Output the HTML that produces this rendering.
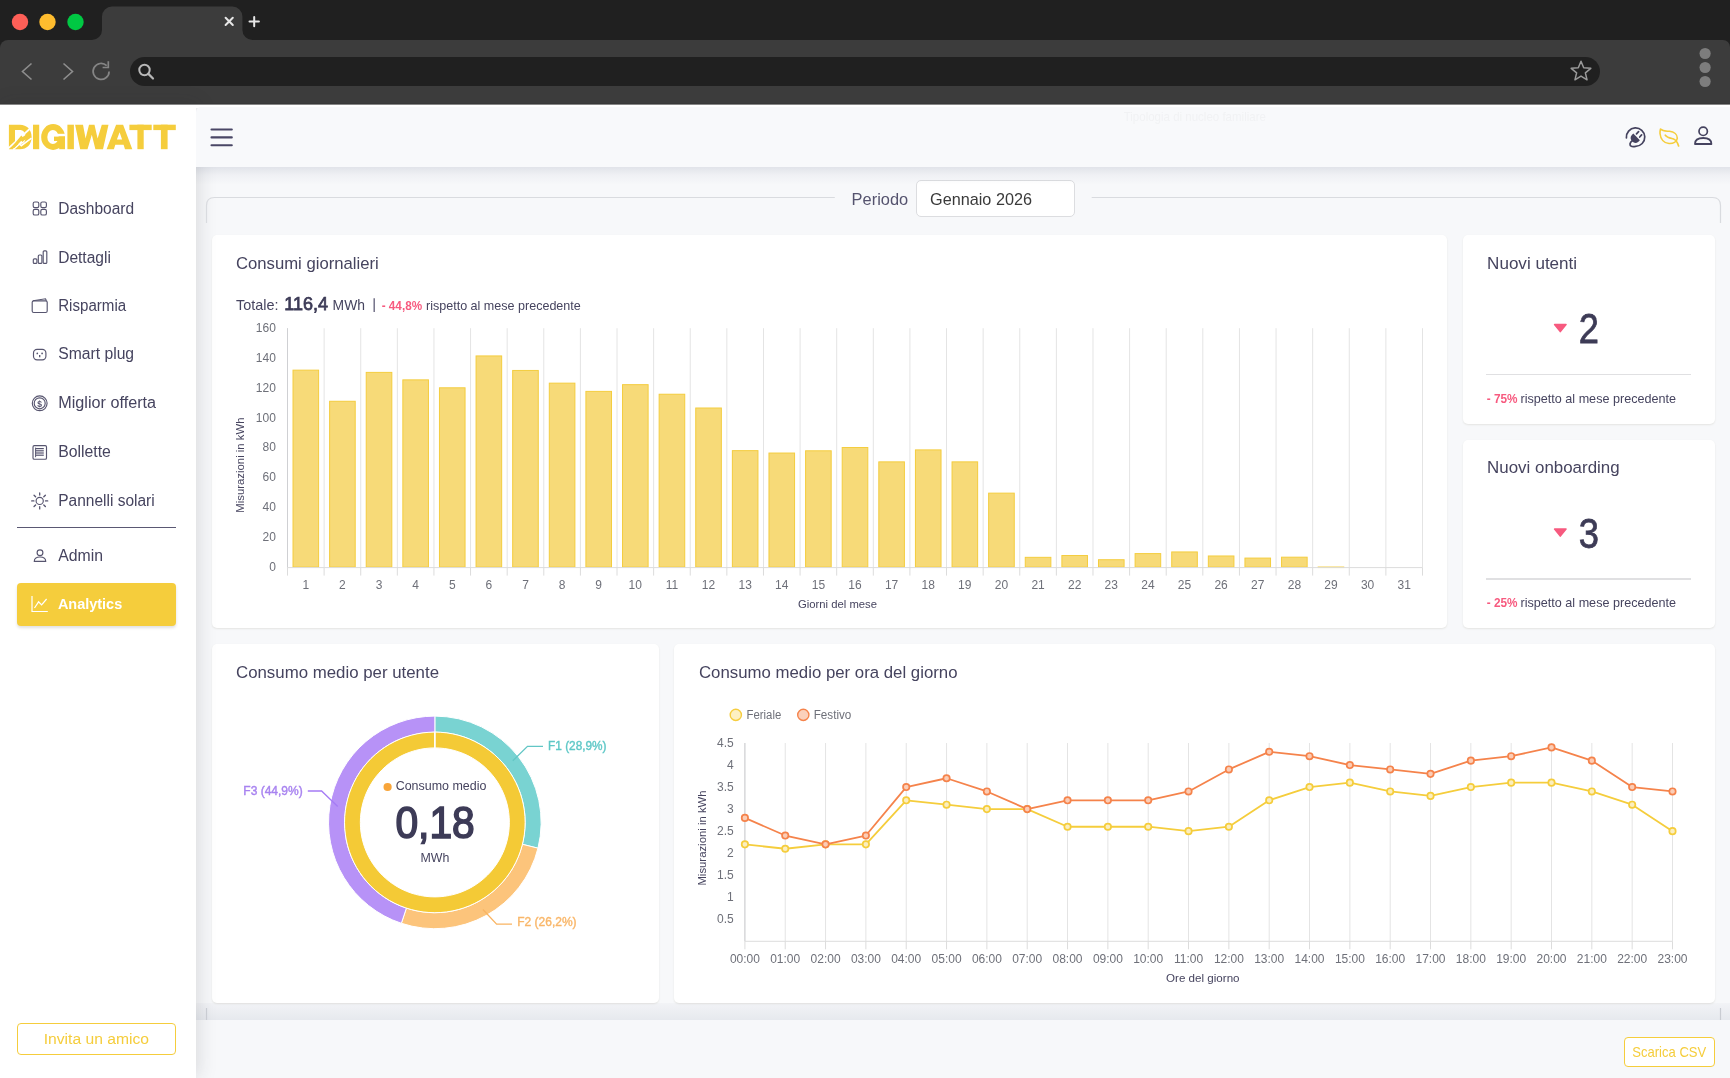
<!DOCTYPE html><html><head><meta charset="utf-8"><style>html,body{margin:0;padding:0}body{width:1730px;height:1078px;overflow:hidden;position:relative;font-family:"Liberation Sans",sans-serif;background:#202020}svg text{font-family:"Liberation Sans",sans-serif}</style></head><body><div style="position:absolute;left:0;top:0;width:1730px;height:40px;background:#202020"></div><div style="position:absolute;left:0;top:40px;width:1730px;height:64px;background:#3c3c3c;border-top-right-radius:7px;border-top-left-radius:8px"></div><div style="position:absolute;left:130px;top:57px;width:1470px;height:29px;background:#202020;border-radius:15px"></div><div style="position:absolute;left:0;top:104px;width:1730px;height:974px;background:#f7f8fa"></div><div style="position:absolute;left:0;top:103px;width:1730px;height:1px;background:#383838"></div><div style="position:absolute;left:196px;top:104px;width:1534px;height:4px;background:#ffffff;z-index:3"></div><div style="position:absolute;left:196px;top:107px;width:1534px;height:60px;background:#f8f9fb;z-index:3;border-top-left-radius:5px"></div><div style="position:absolute;left:196px;top:167px;width:1534px;height:18px;background:linear-gradient(rgba(30,45,85,0.10),rgba(30,45,85,0.035) 45%,rgba(30,45,85,0));z-index:3"></div><div style="position:absolute;left:0;top:104px;width:196px;height:974px;background:#ffffff;box-shadow:2px 0 18px rgba(40,42,48,0.15);z-index:2"></div><div style="position:absolute;left:17px;top:527px;width:159px;height:1.4px;background:#5a5873;z-index:3"></div><div style="position:absolute;left:17px;top:582.5px;width:159px;height:43px;background:#f5cd3c;border-radius:4px;box-shadow:0 2px 3px rgba(0,0,0,0.12);z-index:3"></div><div style="position:absolute;left:17px;top:1023px;width:157px;height:30px;border:1.3px solid #f5cd3c;border-radius:4px;background:#fff;z-index:3"></div><div style="position:absolute;left:916.2px;top:180px;width:156.5px;height:34.5px;background:#fff;border:1px solid #dcdde0;border-radius:5px;z-index:1"></div><div style="position:absolute;left:196px;top:1003px;width:1534px;height:17px;background:linear-gradient(#f2f3f6,#e6e9ee)"></div><div style="position:absolute;left:1623.5px;top:1037px;width:89px;height:27.5px;border:1.3px solid #f5cd3c;border-radius:4px;background:#fff;z-index:1"></div><div style="position:absolute;left:212px;top:234.5px;width:1234.5px;height:393px;background:#fff;border-radius:5px;box-shadow:0 1px 2px rgba(70,60,20,0.10);z-index:1"></div><div style="position:absolute;left:1462.5px;top:234.5px;width:252.5px;height:189.5px;background:#fff;border-radius:5px;box-shadow:0 1px 2px rgba(70,60,20,0.10);z-index:1"></div><div style="position:absolute;left:1462.5px;top:440px;width:252.5px;height:188px;background:#fff;border-radius:5px;box-shadow:0 1px 2px rgba(70,60,20,0.10);z-index:1"></div><div style="position:absolute;left:212px;top:643.6px;width:447px;height:359px;background:#fff;border-radius:5px;box-shadow:0 1px 2px rgba(70,60,20,0.10);z-index:1"></div><div style="position:absolute;left:674.2px;top:643.6px;width:1040.8px;height:359px;background:#fff;border-radius:5px;box-shadow:0 1px 2px rgba(70,60,20,0.10);z-index:1"></div><div style="position:absolute;left:1486.2px;top:373.9px;width:205px;height:1.4px;background:#e0e0e2;z-index:2"></div><div style="position:absolute;left:1486.2px;top:578.4px;width:205px;height:1.4px;background:#e0e0e2;z-index:2"></div><svg width="1730" height="1078" style="position:absolute;left:0;top:0;z-index:10;will-change:transform"><circle cx="20.0" cy="22" r="8.2" fill="#fe5f57"/><circle cx="47.5" cy="22" r="8.2" fill="#febc2e"/><circle cx="75.5" cy="22" r="8.2" fill="#00c843"/><path d="M92 40 A10 10 0 0 0 102 30 L102 16.5 A10 10 0 0 1 112 6.5 L232.4 6.5 A10 10 0 0 1 242.4 16.5 L242.4 30 A10 10 0 0 0 252.4 40 Z" fill="#3c3c3c"/><path d="M225.6 17.8 L232.8 25 M232.8 17.8 L225.6 25" stroke="#e6e6e6" stroke-width="2" stroke-linecap="round"/><path d="M254.2 16.9 L254.2 26.3 M249.5 21.6 L258.9 21.6" stroke="#e6e6e6" stroke-width="2" stroke-linecap="round"/><path d="M31.5 63.5 L22.5 71.5 L31.5 79.5" fill="none" stroke="#8e8e8e" stroke-width="1.6"/><path d="M63.5 63.5 L72.5 71.5 L63.5 79.5" fill="none" stroke="#8e8e8e" stroke-width="1.6"/><path d="M109.1 71.4 A8 8 0 1 1 106.7 65.7" fill="none" stroke="#858585" stroke-width="1.7"/><path d="M102.6 67.5 L108.3 67.5 L108.3 61.2" fill="none" stroke="#858585" stroke-width="1.7"/><circle cx="144.5" cy="70" r="5.2" fill="none" stroke="#b8b8b8" stroke-width="2"/><path d="M148.4 73.9 L153 78.5" stroke="#b8b8b8" stroke-width="2.2" stroke-linecap="round"/><polygon points="1581.00,61.20 1583.70,67.78 1590.80,68.32 1585.37,72.92 1587.05,79.83 1581.00,76.10 1574.95,79.83 1576.63,72.92 1571.20,68.32 1578.30,67.78" fill="none" stroke="#9a9a9a" stroke-width="1.5" stroke-linejoin="round"/><circle cx="1705.1" cy="53.5" r="5.6" fill="#7d7d7d"/><circle cx="1705.1" cy="67.5" r="5.6" fill="#7d7d7d"/><circle cx="1705.1" cy="81.5" r="5.6" fill="#7d7d7d"/><rect x="0" y="103" width="1730" height="1.6" fill="#383838"/><g fill="#f5cd3c"><path fill-rule="evenodd" d="M8.9 124.7 L19.8 124.7 C27 124.7 31.6 129.6 31.6 136.9 C31.6 144.3 27 149.2 19.8 149.2 L8.9 149.2 Z M15 129.9 L19.3 129.9 C23.6 129.9 25.6 132.6 25.6 136.9 C25.6 141.3 23.6 144.1 19.3 144.1 L15 144.1 Z"/><path d="M6.9 149.6 L29.6 129" stroke="#fff" stroke-width="1.7" fill="none"/><path d="M13.2 149.6 L19.5 144 L21.3 145.7 L31.5 138.2" stroke="#fff" stroke-width="1.6" fill="none"/><path d="M10.4 148.4 L21.3 135.6 L22.6 137.1 L29.5 132.5 L31 135.3 L22.3 142.1 L21.3 140.8 L14.3 147.9 Z"/><rect x="33" y="124.7" width="6.2" height="24.5"/><ellipse cx="53.1" cy="137" rx="11.9" ry="12.9"/><ellipse cx="52.9" cy="137" rx="5.6" ry="7" fill="#fff"/><rect x="56.5" y="133.8" width="10" height="2.8" fill="#fff"/><rect x="54" y="136.6" width="11" height="4.4"/><rect x="59.2" y="136.6" width="5.8" height="12.6"/><rect x="67.4" y="124.7" width="6.5" height="24.5"/><path d="M75.1 124.7 L83 124.7 L85.6 138.6 L89 124.7 L94.5 124.7 L97.6 138.6 L101.8 124.7 L108.5 124.7 L103 149.2 L95.4 149.2 L91.8 134.8 L87.5 149.2 L80.2 149.2 Z"/><path fill-rule="evenodd" d="M106.6 149.2 L116.1 124.7 L123.1 124.7 L132.3 149.2 L125 149.2 L123.6 144.7 L115.3 144.7 L113.9 149.2 Z M119.6 132.3 L122.1 139.6 L116.9 139.6 Z"/><rect x="129.4" y="124.7" width="22.3" height="5.4"/><rect x="137.4" y="124.7" width="6.3" height="24.5"/><rect x="153.3" y="124.7" width="22.5" height="5.4"/><rect x="160.9" y="124.7" width="6.7" height="24.5"/></g><text x="58.2" y="213.9" font-size="15.60" fill="#46445f" font-weight="400" text-anchor="start" textLength="75.9" lengthAdjust="spacingAndGlyphs" >Dashboard</text><text x="58.2" y="263.0" font-size="15.60" fill="#46445f" font-weight="400" text-anchor="start" textLength="52.7" lengthAdjust="spacingAndGlyphs" >Dettagli</text><text x="58.2" y="311.2" font-size="15.60" fill="#46445f" font-weight="400" text-anchor="start" textLength="68.0" lengthAdjust="spacingAndGlyphs" >Risparmia</text><text x="58.2" y="358.5" font-size="15.60" fill="#46445f" font-weight="400" text-anchor="start" textLength="75.9" lengthAdjust="spacingAndGlyphs" >Smart plug</text><text x="58.2" y="408.0" font-size="15.60" fill="#46445f" font-weight="400" text-anchor="start" textLength="97.9" lengthAdjust="spacingAndGlyphs" >Miglior offerta</text><text x="58.2" y="456.5" font-size="15.60" fill="#46445f" font-weight="400" text-anchor="start" textLength="52.7" lengthAdjust="spacingAndGlyphs" >Bollette</text><text x="58.2" y="505.8" font-size="15.60" fill="#46445f" font-weight="400" text-anchor="start" textLength="96.5" lengthAdjust="spacingAndGlyphs" >Pannelli solari</text><text x="58.2" y="560.9" font-size="15.60" fill="#46445f" font-weight="400" text-anchor="start" textLength="44.8" lengthAdjust="spacingAndGlyphs" >Admin</text><rect x="33.2" y="202.0" width="5.6" height="5.6" rx="1.6" fill="none" stroke="#57556f" stroke-width="1.15"/><rect x="40.8" y="202.0" width="5.6" height="5.6" rx="1.6" fill="none" stroke="#57556f" stroke-width="1.15"/><rect x="33.2" y="209.4" width="5.6" height="5.6" rx="1.6" fill="none" stroke="#57556f" stroke-width="1.15"/><rect x="40.8" y="209.4" width="5.6" height="5.6" rx="1.6" fill="none" stroke="#57556f" stroke-width="1.15"/><rect x="33.3" y="258.8" width="3.6" height="4.6" rx="1" fill="none" stroke="#57556f" stroke-width="1.15"/><rect x="38.3" y="255" width="3.6" height="8.4" rx="1" fill="none" stroke="#57556f" stroke-width="1.15"/><rect x="43.2" y="250.8" width="3.6" height="12.6" rx="1" fill="none" stroke="#57556f" stroke-width="1.15"/><rect x="32.2" y="300.8" width="15" height="11.7" rx="1.5" fill="none" stroke="#57556f" stroke-width="1.15"/><path d="M33 300.8 L45.5 298.8 L46.4 300.8" fill="none" stroke="#57556f" stroke-width="1.15"/><rect x="33.5" y="349.4" width="12.4" height="10.5" rx="3.6" fill="none" stroke="#57556f" stroke-width="1.15"/><circle cx="37.3" cy="353.4" r="0.85" fill="#55536e"/><circle cx="42.1" cy="353.4" r="0.85" fill="#55536e"/><path d="M39.7 355 L39.7 357.2" stroke="#55536e" stroke-width="1.3"/><circle cx="39.7" cy="403.3" r="7.4" fill="none" stroke="#57556f" stroke-width="1.15"/><circle cx="39.7" cy="403.3" r="5.5" fill="none" stroke="#57556f" stroke-width="1.15"/><text x="39.7" y="406.5" font-size="8.5" font-weight="700" fill="#55536e" text-anchor="middle">$</text><rect x="33" y="445.6" width="13.5" height="13.6" rx="1.3" fill="none" stroke="#57556f" stroke-width="1.15"/><path d="M35.8 448.6 L43.8 448.6" stroke="#55536e" stroke-width="1.2"/><path d="M35.8 450.8 L43.8 450.8" stroke="#55536e" stroke-width="1.2"/><path d="M35.8 453.0 L43.8 453.0" stroke="#55536e" stroke-width="1.2"/><path d="M35.8 455.2 L43.8 455.2" stroke="#55536e" stroke-width="1.2"/><path d="M35.6 447.6 L35.6 457.2" stroke="#55536e" stroke-width="1"/><circle cx="39.7" cy="500.9" r="3.6" fill="none" stroke="#57556f" stroke-width="1.15"/><path d="M45.50 500.90 L47.70 500.90" stroke="#55536e" stroke-width="1.3" stroke-linecap="round"/><path d="M43.80 505.00 L45.36 506.56" stroke="#55536e" stroke-width="1.3" stroke-linecap="round"/><path d="M39.70 506.70 L39.70 508.90" stroke="#55536e" stroke-width="1.3" stroke-linecap="round"/><path d="M35.60 505.00 L34.04 506.56" stroke="#55536e" stroke-width="1.3" stroke-linecap="round"/><path d="M33.90 500.90 L31.70 500.90" stroke="#55536e" stroke-width="1.3" stroke-linecap="round"/><path d="M35.60 496.80 L34.04 495.24" stroke="#55536e" stroke-width="1.3" stroke-linecap="round"/><path d="M39.70 495.10 L39.70 492.90" stroke="#55536e" stroke-width="1.3" stroke-linecap="round"/><path d="M43.80 496.80 L45.36 495.24" stroke="#55536e" stroke-width="1.3" stroke-linecap="round"/><circle cx="40" cy="552.7" r="2.9" fill="none" stroke="#57556f" stroke-width="1.15"/><path d="M34.3 561.3 Q34.3 557 40 557 Q45.7 557 45.7 561.3 Z" fill="none" stroke="#57556f" stroke-width="1.15"/><text x="57.9" y="608.5" font-size="15.50" fill="#ffffff" font-weight="700" text-anchor="start" textLength="64.3" lengthAdjust="spacingAndGlyphs" >Analytics</text><path d="M32 596 L32 611.5 L47.8 611.5" fill="none" stroke="#ffffff" stroke-width="1.2"/><path d="M34.5 608 L38.6 601.8 L41.6 604.8 L46.6 599" fill="none" stroke="#ffffff" stroke-width="1.2"/><text x="43.7" y="1043.8" font-size="15.20" fill="#f5cd3c" font-weight="400" text-anchor="start" textLength="105.3" lengthAdjust="spacingAndGlyphs" >Invita un amico</text><path d="M211.5 129.5 L231.8 129.5" stroke="#4a4766" stroke-width="2.1" stroke-linecap="round"/><path d="M211.5 137.4 L231.8 137.4" stroke="#4a4766" stroke-width="2.1" stroke-linecap="round"/><path d="M211.5 145.2 L231.8 145.2" stroke="#4a4766" stroke-width="2.1" stroke-linecap="round"/><text x="1123.7" y="120.8" font-size="13.00" fill="#f1f2f4" font-weight="400" text-anchor="start" textLength="142.2" lengthAdjust="spacingAndGlyphs" >Tipologia di nucleo familiare</text><path d="M1626.4 137.9 A9.2 9.2 0 1 1 1635.6 146.3 Q1629.8 147.4 1630 144 Q1630.3 142 1632.2 140.8" fill="none" stroke="#45435f" stroke-width="1.7" stroke-linecap="round"/><path d="M1633.3 133.6 L1639.9 140.2 L1638.4 141.7 A4.7 4.7 0 0 1 1631.8 135.1 Z" fill="#45435f"/><path d="M1636.5 133.9 L1638.6 131.6 M1639.7 137 L1641.6 134.9" stroke="#45435f" stroke-width="1.7" stroke-linecap="round"/><path d="M1660.5 129 C1663 131.5 1666 131 1669.5 131.3 C1674 131.8 1677.5 134.5 1677.3 138.3 C1677 142 1673 143.8 1669 143.5 C1664 143 1660.5 139 1660 133.5 C1659.9 131.5 1660.2 130 1660.5 129 Z" fill="none" stroke="#f5cd3c" stroke-width="1.6" stroke-linejoin="round"/><path d="M1665.3 135.2 C1667 137.5 1670 138 1673 138.8 C1675.5 139.5 1677.5 142.5 1678.6 146" fill="none" stroke="#f5cd3c" stroke-width="1.7" stroke-linecap="round"/><circle cx="1703.2" cy="131.3" r="4.2" fill="none" stroke="#45435f" stroke-width="1.7"/><path d="M1695 144 Q1695 138 1703.2 138 Q1711.4 138 1711.4 144 Z" fill="none" stroke="#45435f" stroke-width="1.8" stroke-linejoin="round"/><path d="M206.5 223 L206.5 205.5 Q206.5 197.5 214.5 197.5 L834.8 197.5" fill="none" stroke="#d9dbdf" stroke-width="1.2"/><path d="M1091.7 197.5 L1712.5 197.5 Q1720.5 197.5 1720.5 205.5 L1720.5 223" fill="none" stroke="#d9dbdf" stroke-width="1.2"/><path d="M206.5 1008 L206.5 1020 M1720.5 1008 L1720.5 1020" stroke="#c9ccd2" stroke-width="1.2"/><text x="851.6" y="205.4" font-size="17.00" fill="#55536e" font-weight="400" text-anchor="start" textLength="56.6" lengthAdjust="spacingAndGlyphs" >Periodo</text><text x="930.0" y="205.4" font-size="17.00" fill="#3a3a3a" font-weight="400" text-anchor="start" textLength="102.0" lengthAdjust="spacingAndGlyphs" >Gennaio 2026</text><text x="1632.3" y="1056.7" font-size="14.50" fill="#f5cd3c" font-weight="400" text-anchor="start" textLength="73.9" lengthAdjust="spacingAndGlyphs" >Scarica CSV</text><text x="236.0" y="268.9" font-size="16.80" fill="#46445f" font-weight="400" text-anchor="start" textLength="142.8" lengthAdjust="spacingAndGlyphs" >Consumi giornalieri</text><text x="1487.1" y="269.0" font-size="16.80" fill="#46445f" font-weight="400" text-anchor="start" textLength="90.0" lengthAdjust="spacingAndGlyphs" >Nuovi utenti</text><text x="1487.1" y="472.9" font-size="16.80" fill="#46445f" font-weight="400" text-anchor="start" textLength="132.5" lengthAdjust="spacingAndGlyphs" >Nuovi onboarding</text><text x="236.0" y="677.8" font-size="16.80" fill="#46445f" font-weight="400" text-anchor="start" textLength="203.0" lengthAdjust="spacingAndGlyphs" >Consumo medio per utente</text><text x="699.0" y="677.8" font-size="16.80" fill="#46445f" font-weight="400" text-anchor="start" textLength="258.5" lengthAdjust="spacingAndGlyphs" >Consumo medio per ora del giorno</text><text x="236.0" y="310.1" font-size="14.60" fill="#46445f" font-weight="400" text-anchor="start" textLength="42.5" lengthAdjust="spacingAndGlyphs" >Totale:</text><text x="284.2" y="310.0" font-size="18.40" fill="#3d3b57" font-weight="400" text-anchor="start" textLength="43.8" lengthAdjust="spacingAndGlyphs" stroke="#3d3b57" stroke-width="0.75">116,4</text><text x="332.6" y="310.1" font-size="14.60" fill="#46445f" font-weight="400" text-anchor="start" textLength="32.4" lengthAdjust="spacingAndGlyphs" >MWh</text><path d="M374.2 298.3 L374.2 311.9" stroke="#6a6880" stroke-width="1.4"/><text x="381.7" y="309.7" font-size="13.00" fill="#f75a7f" font-weight="700" text-anchor="start" textLength="40.4" lengthAdjust="spacingAndGlyphs" >- 44,8%</text><text x="426.0" y="309.7" font-size="13.00" fill="#46445f" font-weight="400" text-anchor="start" textLength="154.8" lengthAdjust="spacingAndGlyphs" >rispetto al mese precedente</text><path d="M287.50 328.2 L287.50 567.6" stroke="#e4e4e4" stroke-width="1"/><path d="M324.11 328.2 L324.11 567.6" stroke="#e4e4e4" stroke-width="1"/><path d="M360.73 328.2 L360.73 567.6" stroke="#e4e4e4" stroke-width="1"/><path d="M397.34 328.2 L397.34 567.6" stroke="#e4e4e4" stroke-width="1"/><path d="M433.95 328.2 L433.95 567.6" stroke="#e4e4e4" stroke-width="1"/><path d="M470.56 328.2 L470.56 567.6" stroke="#e4e4e4" stroke-width="1"/><path d="M507.18 328.2 L507.18 567.6" stroke="#e4e4e4" stroke-width="1"/><path d="M543.79 328.2 L543.79 567.6" stroke="#e4e4e4" stroke-width="1"/><path d="M580.40 328.2 L580.40 567.6" stroke="#e4e4e4" stroke-width="1"/><path d="M617.02 328.2 L617.02 567.6" stroke="#e4e4e4" stroke-width="1"/><path d="M653.63 328.2 L653.63 567.6" stroke="#e4e4e4" stroke-width="1"/><path d="M690.24 328.2 L690.24 567.6" stroke="#e4e4e4" stroke-width="1"/><path d="M726.85 328.2 L726.85 567.6" stroke="#e4e4e4" stroke-width="1"/><path d="M763.47 328.2 L763.47 567.6" stroke="#e4e4e4" stroke-width="1"/><path d="M800.08 328.2 L800.08 567.6" stroke="#e4e4e4" stroke-width="1"/><path d="M836.69 328.2 L836.69 567.6" stroke="#e4e4e4" stroke-width="1"/><path d="M873.31 328.2 L873.31 567.6" stroke="#e4e4e4" stroke-width="1"/><path d="M909.92 328.2 L909.92 567.6" stroke="#e4e4e4" stroke-width="1"/><path d="M946.53 328.2 L946.53 567.6" stroke="#e4e4e4" stroke-width="1"/><path d="M983.15 328.2 L983.15 567.6" stroke="#e4e4e4" stroke-width="1"/><path d="M1019.76 328.2 L1019.76 567.6" stroke="#e4e4e4" stroke-width="1"/><path d="M1056.37 328.2 L1056.37 567.6" stroke="#e4e4e4" stroke-width="1"/><path d="M1092.98 328.2 L1092.98 567.6" stroke="#e4e4e4" stroke-width="1"/><path d="M1129.60 328.2 L1129.60 567.6" stroke="#e4e4e4" stroke-width="1"/><path d="M1166.21 328.2 L1166.21 567.6" stroke="#e4e4e4" stroke-width="1"/><path d="M1202.82 328.2 L1202.82 567.6" stroke="#e4e4e4" stroke-width="1"/><path d="M1239.44 328.2 L1239.44 567.6" stroke="#e4e4e4" stroke-width="1"/><path d="M1276.05 328.2 L1276.05 567.6" stroke="#e4e4e4" stroke-width="1"/><path d="M1312.66 328.2 L1312.66 567.6" stroke="#e4e4e4" stroke-width="1"/><path d="M1349.27 328.2 L1349.27 567.6" stroke="#e4e4e4" stroke-width="1"/><path d="M1385.89 328.2 L1385.89 567.6" stroke="#e4e4e4" stroke-width="1"/><path d="M1422.50 328.2 L1422.50 567.6" stroke="#e4e4e4" stroke-width="1"/><rect x="293.01" y="370.15" width="25.60" height="196.95" fill="#f7da78" stroke="#f4cd3f" stroke-width="1"/><rect x="329.62" y="401.27" width="25.60" height="165.83" fill="#f7da78" stroke="#f4cd3f" stroke-width="1"/><rect x="366.23" y="372.39" width="25.60" height="194.71" fill="#f7da78" stroke="#f4cd3f" stroke-width="1"/><rect x="402.85" y="379.87" width="25.60" height="187.23" fill="#f7da78" stroke="#f4cd3f" stroke-width="1"/><rect x="439.46" y="387.80" width="25.60" height="179.30" fill="#f7da78" stroke="#f4cd3f" stroke-width="1"/><rect x="476.07" y="355.93" width="25.60" height="211.17" fill="#f7da78" stroke="#f4cd3f" stroke-width="1"/><rect x="512.68" y="370.45" width="25.60" height="196.65" fill="#f7da78" stroke="#f4cd3f" stroke-width="1"/><rect x="549.30" y="383.16" width="25.60" height="183.94" fill="#f7da78" stroke="#f4cd3f" stroke-width="1"/><rect x="585.91" y="391.39" width="25.60" height="175.71" fill="#f7da78" stroke="#f4cd3f" stroke-width="1"/><rect x="622.52" y="384.66" width="25.60" height="182.44" fill="#f7da78" stroke="#f4cd3f" stroke-width="1"/><rect x="659.14" y="394.24" width="25.60" height="172.86" fill="#f7da78" stroke="#f4cd3f" stroke-width="1"/><rect x="695.75" y="408.00" width="25.60" height="159.10" fill="#f7da78" stroke="#f4cd3f" stroke-width="1"/><rect x="732.36" y="450.64" width="25.60" height="116.46" fill="#f7da78" stroke="#f4cd3f" stroke-width="1"/><rect x="768.97" y="453.04" width="25.60" height="114.06" fill="#f7da78" stroke="#f4cd3f" stroke-width="1"/><rect x="805.59" y="450.79" width="25.60" height="116.31" fill="#f7da78" stroke="#f4cd3f" stroke-width="1"/><rect x="842.20" y="447.50" width="25.60" height="119.60" fill="#f7da78" stroke="#f4cd3f" stroke-width="1"/><rect x="878.81" y="461.87" width="25.60" height="105.23" fill="#f7da78" stroke="#f4cd3f" stroke-width="1"/><rect x="915.43" y="449.90" width="25.60" height="117.20" fill="#f7da78" stroke="#f4cd3f" stroke-width="1"/><rect x="952.04" y="461.87" width="25.60" height="105.23" fill="#f7da78" stroke="#f4cd3f" stroke-width="1"/><rect x="988.65" y="493.14" width="25.60" height="73.96" fill="#f7da78" stroke="#f4cd3f" stroke-width="1"/><rect x="1025.26" y="557.33" width="25.60" height="9.77" fill="#f7da78" stroke="#f4cd3f" stroke-width="1"/><rect x="1061.88" y="555.53" width="25.60" height="11.57" fill="#f7da78" stroke="#f4cd3f" stroke-width="1"/><rect x="1098.49" y="559.72" width="25.60" height="7.38" fill="#f7da78" stroke="#f4cd3f" stroke-width="1"/><rect x="1135.10" y="553.59" width="25.60" height="13.51" fill="#f7da78" stroke="#f4cd3f" stroke-width="1"/><rect x="1171.72" y="551.94" width="25.60" height="15.16" fill="#f7da78" stroke="#f4cd3f" stroke-width="1"/><rect x="1208.33" y="555.98" width="25.60" height="11.12" fill="#f7da78" stroke="#f4cd3f" stroke-width="1"/><rect x="1244.94" y="558.08" width="25.60" height="9.02" fill="#f7da78" stroke="#f4cd3f" stroke-width="1"/><rect x="1281.55" y="557.18" width="25.60" height="9.92" fill="#f7da78" stroke="#f4cd3f" stroke-width="1"/><rect x="1318.17" y="567.05" width="25.60" height="0.50" fill="#f7da78" stroke="#f4cd3f" stroke-width="1"/><path d="M287.5 328.2 L287.5 567.6" stroke="#cfd0d3" stroke-width="1"/><path d="M287.5 567.6 L1422.5 567.6" stroke="#dcdcdc" stroke-width="1"/><path d="M287.50 567.6 L287.50 575.6" stroke="#dcdcdc" stroke-width="1"/><path d="M324.11 567.6 L324.11 575.6" stroke="#dcdcdc" stroke-width="1"/><path d="M360.73 567.6 L360.73 575.6" stroke="#dcdcdc" stroke-width="1"/><path d="M397.34 567.6 L397.34 575.6" stroke="#dcdcdc" stroke-width="1"/><path d="M433.95 567.6 L433.95 575.6" stroke="#dcdcdc" stroke-width="1"/><path d="M470.56 567.6 L470.56 575.6" stroke="#dcdcdc" stroke-width="1"/><path d="M507.18 567.6 L507.18 575.6" stroke="#dcdcdc" stroke-width="1"/><path d="M543.79 567.6 L543.79 575.6" stroke="#dcdcdc" stroke-width="1"/><path d="M580.40 567.6 L580.40 575.6" stroke="#dcdcdc" stroke-width="1"/><path d="M617.02 567.6 L617.02 575.6" stroke="#dcdcdc" stroke-width="1"/><path d="M653.63 567.6 L653.63 575.6" stroke="#dcdcdc" stroke-width="1"/><path d="M690.24 567.6 L690.24 575.6" stroke="#dcdcdc" stroke-width="1"/><path d="M726.85 567.6 L726.85 575.6" stroke="#dcdcdc" stroke-width="1"/><path d="M763.47 567.6 L763.47 575.6" stroke="#dcdcdc" stroke-width="1"/><path d="M800.08 567.6 L800.08 575.6" stroke="#dcdcdc" stroke-width="1"/><path d="M836.69 567.6 L836.69 575.6" stroke="#dcdcdc" stroke-width="1"/><path d="M873.31 567.6 L873.31 575.6" stroke="#dcdcdc" stroke-width="1"/><path d="M909.92 567.6 L909.92 575.6" stroke="#dcdcdc" stroke-width="1"/><path d="M946.53 567.6 L946.53 575.6" stroke="#dcdcdc" stroke-width="1"/><path d="M983.15 567.6 L983.15 575.6" stroke="#dcdcdc" stroke-width="1"/><path d="M1019.76 567.6 L1019.76 575.6" stroke="#dcdcdc" stroke-width="1"/><path d="M1056.37 567.6 L1056.37 575.6" stroke="#dcdcdc" stroke-width="1"/><path d="M1092.98 567.6 L1092.98 575.6" stroke="#dcdcdc" stroke-width="1"/><path d="M1129.60 567.6 L1129.60 575.6" stroke="#dcdcdc" stroke-width="1"/><path d="M1166.21 567.6 L1166.21 575.6" stroke="#dcdcdc" stroke-width="1"/><path d="M1202.82 567.6 L1202.82 575.6" stroke="#dcdcdc" stroke-width="1"/><path d="M1239.44 567.6 L1239.44 575.6" stroke="#dcdcdc" stroke-width="1"/><path d="M1276.05 567.6 L1276.05 575.6" stroke="#dcdcdc" stroke-width="1"/><path d="M1312.66 567.6 L1312.66 575.6" stroke="#dcdcdc" stroke-width="1"/><path d="M1349.27 567.6 L1349.27 575.6" stroke="#dcdcdc" stroke-width="1"/><path d="M1385.89 567.6 L1385.89 575.6" stroke="#dcdcdc" stroke-width="1"/><path d="M1422.50 567.6 L1422.50 575.6" stroke="#dcdcdc" stroke-width="1"/><text x="275.9" y="570.8" font-size="12.00" fill="#6e7079" font-weight="400" text-anchor="end" >0</text><text x="275.9" y="540.9" font-size="12.00" fill="#6e7079" font-weight="400" text-anchor="end" >20</text><text x="275.9" y="511.1" font-size="12.00" fill="#6e7079" font-weight="400" text-anchor="end" >40</text><text x="275.9" y="481.2" font-size="12.00" fill="#6e7079" font-weight="400" text-anchor="end" >60</text><text x="275.9" y="451.4" font-size="12.00" fill="#6e7079" font-weight="400" text-anchor="end" >80</text><text x="275.9" y="421.5" font-size="12.00" fill="#6e7079" font-weight="400" text-anchor="end" >100</text><text x="275.9" y="391.6" font-size="12.00" fill="#6e7079" font-weight="400" text-anchor="end" >120</text><text x="275.9" y="361.8" font-size="12.00" fill="#6e7079" font-weight="400" text-anchor="end" >140</text><text x="275.9" y="332.0" font-size="12.00" fill="#6e7079" font-weight="400" text-anchor="end" >160</text><text x="305.8" y="588.9" font-size="12.00" fill="#6e7079" font-weight="400" text-anchor="middle" >1</text><text x="342.4" y="588.9" font-size="12.00" fill="#6e7079" font-weight="400" text-anchor="middle" >2</text><text x="379.0" y="588.9" font-size="12.00" fill="#6e7079" font-weight="400" text-anchor="middle" >3</text><text x="415.6" y="588.9" font-size="12.00" fill="#6e7079" font-weight="400" text-anchor="middle" >4</text><text x="452.3" y="588.9" font-size="12.00" fill="#6e7079" font-weight="400" text-anchor="middle" >5</text><text x="488.9" y="588.9" font-size="12.00" fill="#6e7079" font-weight="400" text-anchor="middle" >6</text><text x="525.5" y="588.9" font-size="12.00" fill="#6e7079" font-weight="400" text-anchor="middle" >7</text><text x="562.1" y="588.9" font-size="12.00" fill="#6e7079" font-weight="400" text-anchor="middle" >8</text><text x="598.7" y="588.9" font-size="12.00" fill="#6e7079" font-weight="400" text-anchor="middle" >9</text><text x="635.3" y="588.9" font-size="12.00" fill="#6e7079" font-weight="400" text-anchor="middle" >10</text><text x="671.9" y="588.9" font-size="12.00" fill="#6e7079" font-weight="400" text-anchor="middle" >11</text><text x="708.5" y="588.9" font-size="12.00" fill="#6e7079" font-weight="400" text-anchor="middle" >12</text><text x="745.2" y="588.9" font-size="12.00" fill="#6e7079" font-weight="400" text-anchor="middle" >13</text><text x="781.8" y="588.9" font-size="12.00" fill="#6e7079" font-weight="400" text-anchor="middle" >14</text><text x="818.4" y="588.9" font-size="12.00" fill="#6e7079" font-weight="400" text-anchor="middle" >15</text><text x="855.0" y="588.9" font-size="12.00" fill="#6e7079" font-weight="400" text-anchor="middle" >16</text><text x="891.6" y="588.9" font-size="12.00" fill="#6e7079" font-weight="400" text-anchor="middle" >17</text><text x="928.2" y="588.9" font-size="12.00" fill="#6e7079" font-weight="400" text-anchor="middle" >18</text><text x="964.8" y="588.9" font-size="12.00" fill="#6e7079" font-weight="400" text-anchor="middle" >19</text><text x="1001.5" y="588.9" font-size="12.00" fill="#6e7079" font-weight="400" text-anchor="middle" >20</text><text x="1038.1" y="588.9" font-size="12.00" fill="#6e7079" font-weight="400" text-anchor="middle" >21</text><text x="1074.7" y="588.9" font-size="12.00" fill="#6e7079" font-weight="400" text-anchor="middle" >22</text><text x="1111.3" y="588.9" font-size="12.00" fill="#6e7079" font-weight="400" text-anchor="middle" >23</text><text x="1147.9" y="588.9" font-size="12.00" fill="#6e7079" font-weight="400" text-anchor="middle" >24</text><text x="1184.5" y="588.9" font-size="12.00" fill="#6e7079" font-weight="400" text-anchor="middle" >25</text><text x="1221.1" y="588.9" font-size="12.00" fill="#6e7079" font-weight="400" text-anchor="middle" >26</text><text x="1257.7" y="588.9" font-size="12.00" fill="#6e7079" font-weight="400" text-anchor="middle" >27</text><text x="1294.4" y="588.9" font-size="12.00" fill="#6e7079" font-weight="400" text-anchor="middle" >28</text><text x="1331.0" y="588.9" font-size="12.00" fill="#6e7079" font-weight="400" text-anchor="middle" >29</text><text x="1367.6" y="588.9" font-size="12.00" fill="#6e7079" font-weight="400" text-anchor="middle" >30</text><text x="1404.2" y="588.9" font-size="12.00" fill="#6e7079" font-weight="400" text-anchor="middle" >31</text><text x="837.5" y="607.6" font-size="11.60" fill="#46445f" font-weight="400" text-anchor="middle" textLength="79.1" lengthAdjust="spacingAndGlyphs" >Giorni del mese</text><text x="0" y="0" font-size="11.6" fill="#46445f" text-anchor="middle" textLength="95.2" lengthAdjust="spacingAndGlyphs" transform="translate(243.9 465.1) rotate(-90)">Misurazioni in kWh</text><path d="M1554.6 324.5 L1566.0 324.5 L1560.3 331.6 Z" fill="#f75a7f" stroke="#f75a7f" stroke-width="1.6" stroke-linejoin="round"/><text x="1578.8" y="343.4" font-size="43.20" fill="#3d3b56" font-weight="400" text-anchor="start" textLength="20.2" lengthAdjust="spacingAndGlyphs" stroke="#3d3b56" stroke-width="0.8">2</text><text x="1486.7" y="402.6" font-size="12.60" fill="#f75a7f" font-weight="700" text-anchor="start" textLength="30.8" lengthAdjust="spacingAndGlyphs" >- 75%</text><text x="1520.5" y="402.6" font-size="12.60" fill="#46445f" font-weight="400" text-anchor="start" textLength="155.5" lengthAdjust="spacingAndGlyphs" >rispetto al mese precedente</text><path d="M1554.6 529.0 L1566.0 529.0 L1560.3 536.1 Z" fill="#f75a7f" stroke="#f75a7f" stroke-width="1.6" stroke-linejoin="round"/><text x="1578.8" y="547.9" font-size="43.20" fill="#3d3b56" font-weight="400" text-anchor="start" textLength="20.2" lengthAdjust="spacingAndGlyphs" stroke="#3d3b56" stroke-width="0.8">3</text><text x="1486.7" y="607.1" font-size="12.60" fill="#f75a7f" font-weight="700" text-anchor="start" textLength="30.8" lengthAdjust="spacingAndGlyphs" >- 25%</text><text x="1520.5" y="607.1" font-size="12.60" fill="#46445f" font-weight="400" text-anchor="start" textLength="155.5" lengthAdjust="spacingAndGlyphs" >rispetto al mese precedente</text><path d="M434.85 716.10 A106.30 106.30 0 0 1 537.97 848.19 L522.45 844.31 A90.30 90.30 0 0 0 434.85 732.10 Z" fill="#79d3d2" stroke="#fff" stroke-width="1"/><path d="M537.97 848.19 A106.30 106.30 0 0 1 401.37 923.29 L406.41 908.10 A90.30 90.30 0 0 0 522.45 844.31 Z" fill="#fcc47b" stroke="#fff" stroke-width="1"/><path d="M401.37 923.29 A106.30 106.30 0 0 1 434.85 716.10 L434.85 732.10 A90.30 90.30 0 0 0 406.41 908.10 Z" fill="#b792f7" stroke="#fff" stroke-width="1"/><path d="M434.85 732.10 A90.30 90.30 0 1 1 434.83 732.10 L434.84 747.90 A74.50 74.50 0 1 0 434.85 747.90 Z" fill="#f4ca36" stroke="#fff" stroke-width="1"/><path d="M434.85 732 L434.85 748.5" stroke="#fff" stroke-width="1.2"/><path d="M512.8 760.8 L527.5 746.4 L543 746.4" fill="none" stroke="#62c6c5" stroke-width="1.3"/><path d="M337.7 806.5 L321.6 791 L307.8 791" fill="none" stroke="#a57bf5" stroke-width="1.3"/><path d="M482.9 909.5 L496.6 924.2 L512 924.2" fill="none" stroke="#f9b462" stroke-width="1.3"/><text x="548.1" y="750.0" font-size="12.00" fill="#5fc8c7" font-weight="400" text-anchor="start" textLength="58.4" lengthAdjust="spacingAndGlyphs" stroke="#5fc8c7" stroke-width="0.4">F1 (28,9%)</text><text x="243.3" y="794.6" font-size="12.00" fill="#a883f0" font-weight="400" text-anchor="start" textLength="59.4" lengthAdjust="spacingAndGlyphs" stroke="#a883f0" stroke-width="0.4">F3 (44,9%)</text><text x="517.2" y="926.4" font-size="12.00" fill="#f9b76a" font-weight="400" text-anchor="start" textLength="59.4" lengthAdjust="spacingAndGlyphs" stroke="#f9b76a" stroke-width="0.4">F2 (26,2%)</text><circle cx="387.6" cy="787" r="4.1" fill="#f8a53a"/><text x="395.7" y="789.8" font-size="13.00" fill="#46445f" font-weight="400" text-anchor="start" textLength="90.7" lengthAdjust="spacingAndGlyphs" >Consumo medio</text><text x="395.4" y="837.6" font-size="43.60" fill="#3d3b57" font-weight="400" text-anchor="start" textLength="79.4" lengthAdjust="spacingAndGlyphs" stroke="#3d3b57" stroke-width="1.6">0,18</text><text x="420.4" y="862.2" font-size="12.50" fill="#46445f" font-weight="400" text-anchor="start" textLength="28.9" lengthAdjust="spacingAndGlyphs" >MWh</text><path d="M744.90 743.0 L744.90 941.3" stroke="#e4e4e4" stroke-width="1"/><path d="M744.90 941.3 L744.90 949.3" stroke="#dcdcdc" stroke-width="1"/><path d="M785.23 743.0 L785.23 941.3" stroke="#e4e4e4" stroke-width="1"/><path d="M785.23 941.3 L785.23 949.3" stroke="#dcdcdc" stroke-width="1"/><path d="M825.56 743.0 L825.56 941.3" stroke="#e4e4e4" stroke-width="1"/><path d="M825.56 941.3 L825.56 949.3" stroke="#dcdcdc" stroke-width="1"/><path d="M865.89 743.0 L865.89 941.3" stroke="#e4e4e4" stroke-width="1"/><path d="M865.89 941.3 L865.89 949.3" stroke="#dcdcdc" stroke-width="1"/><path d="M906.22 743.0 L906.22 941.3" stroke="#e4e4e4" stroke-width="1"/><path d="M906.22 941.3 L906.22 949.3" stroke="#dcdcdc" stroke-width="1"/><path d="M946.55 743.0 L946.55 941.3" stroke="#e4e4e4" stroke-width="1"/><path d="M946.55 941.3 L946.55 949.3" stroke="#dcdcdc" stroke-width="1"/><path d="M986.88 743.0 L986.88 941.3" stroke="#e4e4e4" stroke-width="1"/><path d="M986.88 941.3 L986.88 949.3" stroke="#dcdcdc" stroke-width="1"/><path d="M1027.21 743.0 L1027.21 941.3" stroke="#e4e4e4" stroke-width="1"/><path d="M1027.21 941.3 L1027.21 949.3" stroke="#dcdcdc" stroke-width="1"/><path d="M1067.54 743.0 L1067.54 941.3" stroke="#e4e4e4" stroke-width="1"/><path d="M1067.54 941.3 L1067.54 949.3" stroke="#dcdcdc" stroke-width="1"/><path d="M1107.87 743.0 L1107.87 941.3" stroke="#e4e4e4" stroke-width="1"/><path d="M1107.87 941.3 L1107.87 949.3" stroke="#dcdcdc" stroke-width="1"/><path d="M1148.20 743.0 L1148.20 941.3" stroke="#e4e4e4" stroke-width="1"/><path d="M1148.20 941.3 L1148.20 949.3" stroke="#dcdcdc" stroke-width="1"/><path d="M1188.53 743.0 L1188.53 941.3" stroke="#e4e4e4" stroke-width="1"/><path d="M1188.53 941.3 L1188.53 949.3" stroke="#dcdcdc" stroke-width="1"/><path d="M1228.87 743.0 L1228.87 941.3" stroke="#e4e4e4" stroke-width="1"/><path d="M1228.87 941.3 L1228.87 949.3" stroke="#dcdcdc" stroke-width="1"/><path d="M1269.20 743.0 L1269.20 941.3" stroke="#e4e4e4" stroke-width="1"/><path d="M1269.20 941.3 L1269.20 949.3" stroke="#dcdcdc" stroke-width="1"/><path d="M1309.53 743.0 L1309.53 941.3" stroke="#e4e4e4" stroke-width="1"/><path d="M1309.53 941.3 L1309.53 949.3" stroke="#dcdcdc" stroke-width="1"/><path d="M1349.86 743.0 L1349.86 941.3" stroke="#e4e4e4" stroke-width="1"/><path d="M1349.86 941.3 L1349.86 949.3" stroke="#dcdcdc" stroke-width="1"/><path d="M1390.19 743.0 L1390.19 941.3" stroke="#e4e4e4" stroke-width="1"/><path d="M1390.19 941.3 L1390.19 949.3" stroke="#dcdcdc" stroke-width="1"/><path d="M1430.52 743.0 L1430.52 941.3" stroke="#e4e4e4" stroke-width="1"/><path d="M1430.52 941.3 L1430.52 949.3" stroke="#dcdcdc" stroke-width="1"/><path d="M1470.85 743.0 L1470.85 941.3" stroke="#e4e4e4" stroke-width="1"/><path d="M1470.85 941.3 L1470.85 949.3" stroke="#dcdcdc" stroke-width="1"/><path d="M1511.18 743.0 L1511.18 941.3" stroke="#e4e4e4" stroke-width="1"/><path d="M1511.18 941.3 L1511.18 949.3" stroke="#dcdcdc" stroke-width="1"/><path d="M1551.51 743.0 L1551.51 941.3" stroke="#e4e4e4" stroke-width="1"/><path d="M1551.51 941.3 L1551.51 949.3" stroke="#dcdcdc" stroke-width="1"/><path d="M1591.84 743.0 L1591.84 941.3" stroke="#e4e4e4" stroke-width="1"/><path d="M1591.84 941.3 L1591.84 949.3" stroke="#dcdcdc" stroke-width="1"/><path d="M1632.17 743.0 L1632.17 941.3" stroke="#e4e4e4" stroke-width="1"/><path d="M1632.17 941.3 L1632.17 949.3" stroke="#dcdcdc" stroke-width="1"/><path d="M1672.50 743.0 L1672.50 941.3" stroke="#e4e4e4" stroke-width="1"/><path d="M1672.50 941.3 L1672.50 949.3" stroke="#dcdcdc" stroke-width="1"/><path d="M744.9 743.0 L744.9 941.3" stroke="#cfd0d3" stroke-width="1"/><path d="M744.9 941.3 L1672.5 941.3" stroke="#dcdcdc" stroke-width="1"/><text x="733.8" y="922.7" font-size="12.00" fill="#6e7079" font-weight="400" text-anchor="end" >0.5</text><text x="733.8" y="900.7" font-size="12.00" fill="#6e7079" font-weight="400" text-anchor="end" >1</text><text x="733.8" y="878.6" font-size="12.00" fill="#6e7079" font-weight="400" text-anchor="end" >1.5</text><text x="733.8" y="856.6" font-size="12.00" fill="#6e7079" font-weight="400" text-anchor="end" >2</text><text x="733.8" y="834.6" font-size="12.00" fill="#6e7079" font-weight="400" text-anchor="end" >2.5</text><text x="733.8" y="812.6" font-size="12.00" fill="#6e7079" font-weight="400" text-anchor="end" >3</text><text x="733.8" y="790.5" font-size="12.00" fill="#6e7079" font-weight="400" text-anchor="end" >3.5</text><text x="733.8" y="768.5" font-size="12.00" fill="#6e7079" font-weight="400" text-anchor="end" >4</text><text x="733.8" y="746.5" font-size="12.00" fill="#6e7079" font-weight="400" text-anchor="end" >4.5</text><text x="744.9" y="962.6" font-size="12.00" fill="#6e7079" font-weight="400" text-anchor="middle" >00:00</text><text x="785.2" y="962.6" font-size="12.00" fill="#6e7079" font-weight="400" text-anchor="middle" >01:00</text><text x="825.6" y="962.6" font-size="12.00" fill="#6e7079" font-weight="400" text-anchor="middle" >02:00</text><text x="865.9" y="962.6" font-size="12.00" fill="#6e7079" font-weight="400" text-anchor="middle" >03:00</text><text x="906.2" y="962.6" font-size="12.00" fill="#6e7079" font-weight="400" text-anchor="middle" >04:00</text><text x="946.6" y="962.6" font-size="12.00" fill="#6e7079" font-weight="400" text-anchor="middle" >05:00</text><text x="986.9" y="962.6" font-size="12.00" fill="#6e7079" font-weight="400" text-anchor="middle" >06:00</text><text x="1027.2" y="962.6" font-size="12.00" fill="#6e7079" font-weight="400" text-anchor="middle" >07:00</text><text x="1067.5" y="962.6" font-size="12.00" fill="#6e7079" font-weight="400" text-anchor="middle" >08:00</text><text x="1107.9" y="962.6" font-size="12.00" fill="#6e7079" font-weight="400" text-anchor="middle" >09:00</text><text x="1148.2" y="962.6" font-size="12.00" fill="#6e7079" font-weight="400" text-anchor="middle" >10:00</text><text x="1188.5" y="962.6" font-size="12.00" fill="#6e7079" font-weight="400" text-anchor="middle" >11:00</text><text x="1228.9" y="962.6" font-size="12.00" fill="#6e7079" font-weight="400" text-anchor="middle" >12:00</text><text x="1269.2" y="962.6" font-size="12.00" fill="#6e7079" font-weight="400" text-anchor="middle" >13:00</text><text x="1309.5" y="962.6" font-size="12.00" fill="#6e7079" font-weight="400" text-anchor="middle" >14:00</text><text x="1349.9" y="962.6" font-size="12.00" fill="#6e7079" font-weight="400" text-anchor="middle" >15:00</text><text x="1390.2" y="962.6" font-size="12.00" fill="#6e7079" font-weight="400" text-anchor="middle" >16:00</text><text x="1430.5" y="962.6" font-size="12.00" fill="#6e7079" font-weight="400" text-anchor="middle" >17:00</text><text x="1470.8" y="962.6" font-size="12.00" fill="#6e7079" font-weight="400" text-anchor="middle" >18:00</text><text x="1511.2" y="962.6" font-size="12.00" fill="#6e7079" font-weight="400" text-anchor="middle" >19:00</text><text x="1551.5" y="962.6" font-size="12.00" fill="#6e7079" font-weight="400" text-anchor="middle" >20:00</text><text x="1591.8" y="962.6" font-size="12.00" fill="#6e7079" font-weight="400" text-anchor="middle" >21:00</text><text x="1632.2" y="962.6" font-size="12.00" fill="#6e7079" font-weight="400" text-anchor="middle" >22:00</text><text x="1672.5" y="962.6" font-size="12.00" fill="#6e7079" font-weight="400" text-anchor="middle" >23:00</text><text x="1202.8" y="981.6" font-size="11.60" fill="#46445f" font-weight="400" text-anchor="middle" textLength="73.5" lengthAdjust="spacingAndGlyphs" >Ore del giorno</text><text x="0" y="0" font-size="11.6" fill="#46445f" text-anchor="middle" textLength="95.2" lengthAdjust="spacingAndGlyphs" transform="translate(706.3 838) rotate(-90)">Misurazioni in kWh</text><polyline points="744.90,844.35 785.23,848.76 825.56,844.35 865.89,844.35 906.22,800.29 946.55,804.69 986.88,809.10 1027.21,809.10 1067.54,826.73 1107.87,826.73 1148.20,826.73 1188.53,831.13 1228.87,826.73 1269.20,800.29 1309.53,787.07 1349.86,782.66 1390.19,791.47 1430.52,795.88 1470.85,787.07 1511.18,782.66 1551.51,782.66 1591.84,791.47 1632.17,804.69 1672.50,831.13" fill="none" stroke="#f5cd3c" stroke-width="1.8" stroke-linejoin="round"/><circle cx="744.90" cy="844.35" r="3.2" fill="#fbeebf" stroke="#f5cd3c" stroke-width="1.7"/><circle cx="785.23" cy="848.76" r="3.2" fill="#fbeebf" stroke="#f5cd3c" stroke-width="1.7"/><circle cx="825.56" cy="844.35" r="3.2" fill="#fbeebf" stroke="#f5cd3c" stroke-width="1.7"/><circle cx="865.89" cy="844.35" r="3.2" fill="#fbeebf" stroke="#f5cd3c" stroke-width="1.7"/><circle cx="906.22" cy="800.29" r="3.2" fill="#fbeebf" stroke="#f5cd3c" stroke-width="1.7"/><circle cx="946.55" cy="804.69" r="3.2" fill="#fbeebf" stroke="#f5cd3c" stroke-width="1.7"/><circle cx="986.88" cy="809.10" r="3.2" fill="#fbeebf" stroke="#f5cd3c" stroke-width="1.7"/><circle cx="1027.21" cy="809.10" r="3.2" fill="#fbeebf" stroke="#f5cd3c" stroke-width="1.7"/><circle cx="1067.54" cy="826.73" r="3.2" fill="#fbeebf" stroke="#f5cd3c" stroke-width="1.7"/><circle cx="1107.87" cy="826.73" r="3.2" fill="#fbeebf" stroke="#f5cd3c" stroke-width="1.7"/><circle cx="1148.20" cy="826.73" r="3.2" fill="#fbeebf" stroke="#f5cd3c" stroke-width="1.7"/><circle cx="1188.53" cy="831.13" r="3.2" fill="#fbeebf" stroke="#f5cd3c" stroke-width="1.7"/><circle cx="1228.87" cy="826.73" r="3.2" fill="#fbeebf" stroke="#f5cd3c" stroke-width="1.7"/><circle cx="1269.20" cy="800.29" r="3.2" fill="#fbeebf" stroke="#f5cd3c" stroke-width="1.7"/><circle cx="1309.53" cy="787.07" r="3.2" fill="#fbeebf" stroke="#f5cd3c" stroke-width="1.7"/><circle cx="1349.86" cy="782.66" r="3.2" fill="#fbeebf" stroke="#f5cd3c" stroke-width="1.7"/><circle cx="1390.19" cy="791.47" r="3.2" fill="#fbeebf" stroke="#f5cd3c" stroke-width="1.7"/><circle cx="1430.52" cy="795.88" r="3.2" fill="#fbeebf" stroke="#f5cd3c" stroke-width="1.7"/><circle cx="1470.85" cy="787.07" r="3.2" fill="#fbeebf" stroke="#f5cd3c" stroke-width="1.7"/><circle cx="1511.18" cy="782.66" r="3.2" fill="#fbeebf" stroke="#f5cd3c" stroke-width="1.7"/><circle cx="1551.51" cy="782.66" r="3.2" fill="#fbeebf" stroke="#f5cd3c" stroke-width="1.7"/><circle cx="1591.84" cy="791.47" r="3.2" fill="#fbeebf" stroke="#f5cd3c" stroke-width="1.7"/><circle cx="1632.17" cy="804.69" r="3.2" fill="#fbeebf" stroke="#f5cd3c" stroke-width="1.7"/><circle cx="1672.50" cy="831.13" r="3.2" fill="#fbeebf" stroke="#f5cd3c" stroke-width="1.7"/><polyline points="744.90,817.91 785.23,835.54 825.56,844.35 865.89,835.54 906.22,787.07 946.55,778.25 986.88,791.47 1027.21,809.10 1067.54,800.29 1107.87,800.29 1148.20,800.29 1188.53,791.47 1228.87,769.44 1269.20,751.81 1309.53,756.22 1349.86,765.03 1390.19,769.44 1430.52,773.85 1470.85,760.63 1511.18,756.22 1551.51,747.41 1591.84,760.63 1632.17,787.07 1672.50,791.47" fill="none" stroke="#f5834b" stroke-width="1.8" stroke-linejoin="round"/><circle cx="744.90" cy="817.91" r="3.2" fill="#fbcdb6" stroke="#f5834b" stroke-width="1.7"/><circle cx="785.23" cy="835.54" r="3.2" fill="#fbcdb6" stroke="#f5834b" stroke-width="1.7"/><circle cx="825.56" cy="844.35" r="3.2" fill="#fbcdb6" stroke="#f5834b" stroke-width="1.7"/><circle cx="865.89" cy="835.54" r="3.2" fill="#fbcdb6" stroke="#f5834b" stroke-width="1.7"/><circle cx="906.22" cy="787.07" r="3.2" fill="#fbcdb6" stroke="#f5834b" stroke-width="1.7"/><circle cx="946.55" cy="778.25" r="3.2" fill="#fbcdb6" stroke="#f5834b" stroke-width="1.7"/><circle cx="986.88" cy="791.47" r="3.2" fill="#fbcdb6" stroke="#f5834b" stroke-width="1.7"/><circle cx="1027.21" cy="809.10" r="3.2" fill="#fbcdb6" stroke="#f5834b" stroke-width="1.7"/><circle cx="1067.54" cy="800.29" r="3.2" fill="#fbcdb6" stroke="#f5834b" stroke-width="1.7"/><circle cx="1107.87" cy="800.29" r="3.2" fill="#fbcdb6" stroke="#f5834b" stroke-width="1.7"/><circle cx="1148.20" cy="800.29" r="3.2" fill="#fbcdb6" stroke="#f5834b" stroke-width="1.7"/><circle cx="1188.53" cy="791.47" r="3.2" fill="#fbcdb6" stroke="#f5834b" stroke-width="1.7"/><circle cx="1228.87" cy="769.44" r="3.2" fill="#fbcdb6" stroke="#f5834b" stroke-width="1.7"/><circle cx="1269.20" cy="751.81" r="3.2" fill="#fbcdb6" stroke="#f5834b" stroke-width="1.7"/><circle cx="1309.53" cy="756.22" r="3.2" fill="#fbcdb6" stroke="#f5834b" stroke-width="1.7"/><circle cx="1349.86" cy="765.03" r="3.2" fill="#fbcdb6" stroke="#f5834b" stroke-width="1.7"/><circle cx="1390.19" cy="769.44" r="3.2" fill="#fbcdb6" stroke="#f5834b" stroke-width="1.7"/><circle cx="1430.52" cy="773.85" r="3.2" fill="#fbcdb6" stroke="#f5834b" stroke-width="1.7"/><circle cx="1470.85" cy="760.63" r="3.2" fill="#fbcdb6" stroke="#f5834b" stroke-width="1.7"/><circle cx="1511.18" cy="756.22" r="3.2" fill="#fbcdb6" stroke="#f5834b" stroke-width="1.7"/><circle cx="1551.51" cy="747.41" r="3.2" fill="#fbcdb6" stroke="#f5834b" stroke-width="1.7"/><circle cx="1591.84" cy="760.63" r="3.2" fill="#fbcdb6" stroke="#f5834b" stroke-width="1.7"/><circle cx="1632.17" cy="787.07" r="3.2" fill="#fbcdb6" stroke="#f5834b" stroke-width="1.7"/><circle cx="1672.50" cy="791.47" r="3.2" fill="#fbcdb6" stroke="#f5834b" stroke-width="1.7"/><circle cx="735.8" cy="714.9" r="5.6" fill="#fdf0c2" stroke="#f6cd3f" stroke-width="1.4"/><text x="746.5" y="719.1" font-size="12.00" fill="#6e7079" font-weight="400" text-anchor="start" textLength="34.8" lengthAdjust="spacingAndGlyphs" >Feriale</text><circle cx="803.3" cy="714.9" r="5.6" fill="#fbd0bb" stroke="#f5834b" stroke-width="1.4"/><text x="813.7" y="719.1" font-size="12.00" fill="#6e7079" font-weight="400" text-anchor="start" textLength="37.7" lengthAdjust="spacingAndGlyphs" >Festivo</text></svg></body></html>
